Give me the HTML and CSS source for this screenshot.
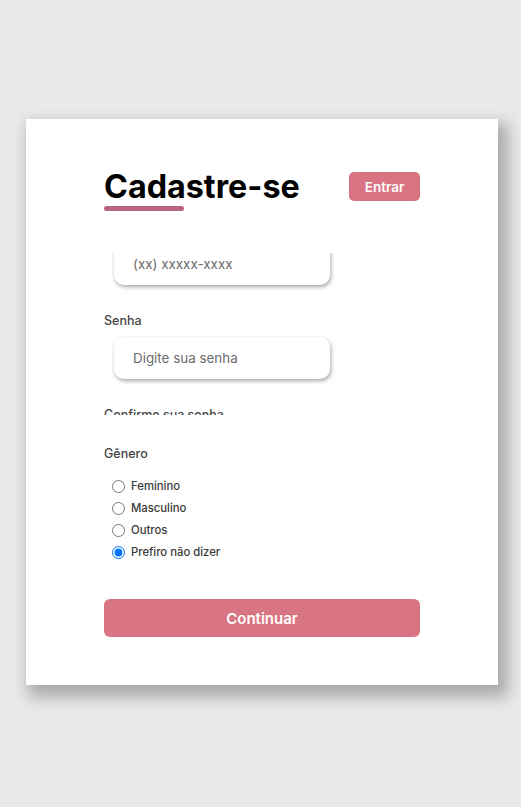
FILE: index.html
```html
<!DOCTYPE html>
<html lang="pt-BR">
<head>
    <meta charset="UTF-8">
    <meta name="viewport" content="width=device-width, initial-scale=1.0">
    <title>Cadastre-se</title>
    <link rel="stylesheet" href="styles.css">
</head>
<body>

    <div class="card">
        <div class="header">
            <div class="title-block">
                <h1>Cadastre-se</h1>
                <div class="underline"></div>
            </div>
            <button class="btn-login" type="button">Entrar</button>
        </div>

        <div class="form-scroll">
            <div class="fields">
                <div class="field">
                    <label for="phone">Celular</label>
                    <input id="phone" type="text" placeholder="(xx) xxxxx-xxxx">
                </div>
                <div class="field">
                    <label for="password">Senha</label>
                    <input id="password" type="password" placeholder="Digite sua senha">
                </div>
                <div class="field">
                    <label for="confirm">Confirme sua senha</label>
                    <input id="confirm" type="password" placeholder="Digite sua senha novamente">
                </div>
            </div>
        </div>

        <div class="gender">
            <span class="gender-title">Gênero</span>
            <div class="radio-list">
                <label class="radio"><input type="radio" name="gender"> Feminino</label>
                <label class="radio"><input type="radio" name="gender"> Masculino</label>
                <label class="radio"><input type="radio" name="gender"> Outros</label>
                <label class="radio"><input type="radio" name="gender" checked> Prefiro não dizer</label>
            </div>
        </div>

        <button class="btn-continue" type="button">Continuar</button>
    </div>

</body>
</html>
```

FILE: styles.css
```css
html, body {
    margin: 0;
    min-height: 100%;
    background-color: #e9e9e9;
}
body {
    padding: 119px 0 122px 26px;
    box-sizing: border-box;
    font-family: Inter, "Noto Sans", sans-serif;
}
.card {
    width: 472px;
    padding: 48px 78px;
    box-sizing: border-box;
    background-color: #fff;
    box-shadow: 6px 8px 14px 4px rgba(0,0,0,0.27);
}
.header {
    display: flex;
    justify-content: space-between;
    align-items: flex-start;
}
h1 {
    margin: 0;
    font-size: 32.3px;
    font-weight: 700;
    line-height: 39px;
    color: #000;
}
.underline {
    width: 80px;
    height: 5px;
    border-radius: 3px;
    background-color: #b8647a;
}
.btn-login {
    margin-top: 5px;
    width: 71px;
    height: 29px;
    border: none;
    border-radius: 5px;
    background-color: #d97482;
    color: #fff;
    font-family: inherit;
    font-size: 13.5px;
    font-weight: 600;
}
.form-scroll {
    height: 162px;
    margin-top: 42px;
    overflow: hidden;
}
.fields {
    margin-top: -34px;
    display: flex;
    flex-direction: column;
    gap: 28px;
}
.field {
    display: flex;
    flex-direction: column;
    gap: 8px;
}
.field label,
.gender-title {
    font-size: 12.5px;
    font-weight: 500;
    line-height: 16px;
    color: #444;
}
.field input {
    width: 216px;
    height: 42px;
    margin-left: 10px;
    padding: 0 19px;
    box-sizing: border-box;
    border: none;
    border-radius: 10px;
    background-color: #fff;
    box-shadow: 1px 2px 4px rgba(0,0,0,0.35);
    font-family: inherit;
    font-size: 13.4px;
    outline: none;
}
.field input::placeholder {
    color: #6b6b6b;
}
.gender {
    margin-top: 31px;
}
.gender-title {
    display: block;
}
.radio-list {
    margin-top: 13px;
    padding-left: 8px;
}
.radio {
    display: flex;
    align-items: center;
    gap: 6px;
    height: 22px;
    font-size: 11.3px;
    font-weight: 500;
    color: #3a3a3a;
}
.radio input {
    margin: 0;
}
.btn-continue {
    display: block;
    width: 100%;
    height: 38px;
    margin-top: 36px;
    border: none;
    border-radius: 6px;
    background-color: #d97482;
    color: #fff;
    font-family: inherit;
    font-size: 15px;
    font-weight: 600;
}
```
